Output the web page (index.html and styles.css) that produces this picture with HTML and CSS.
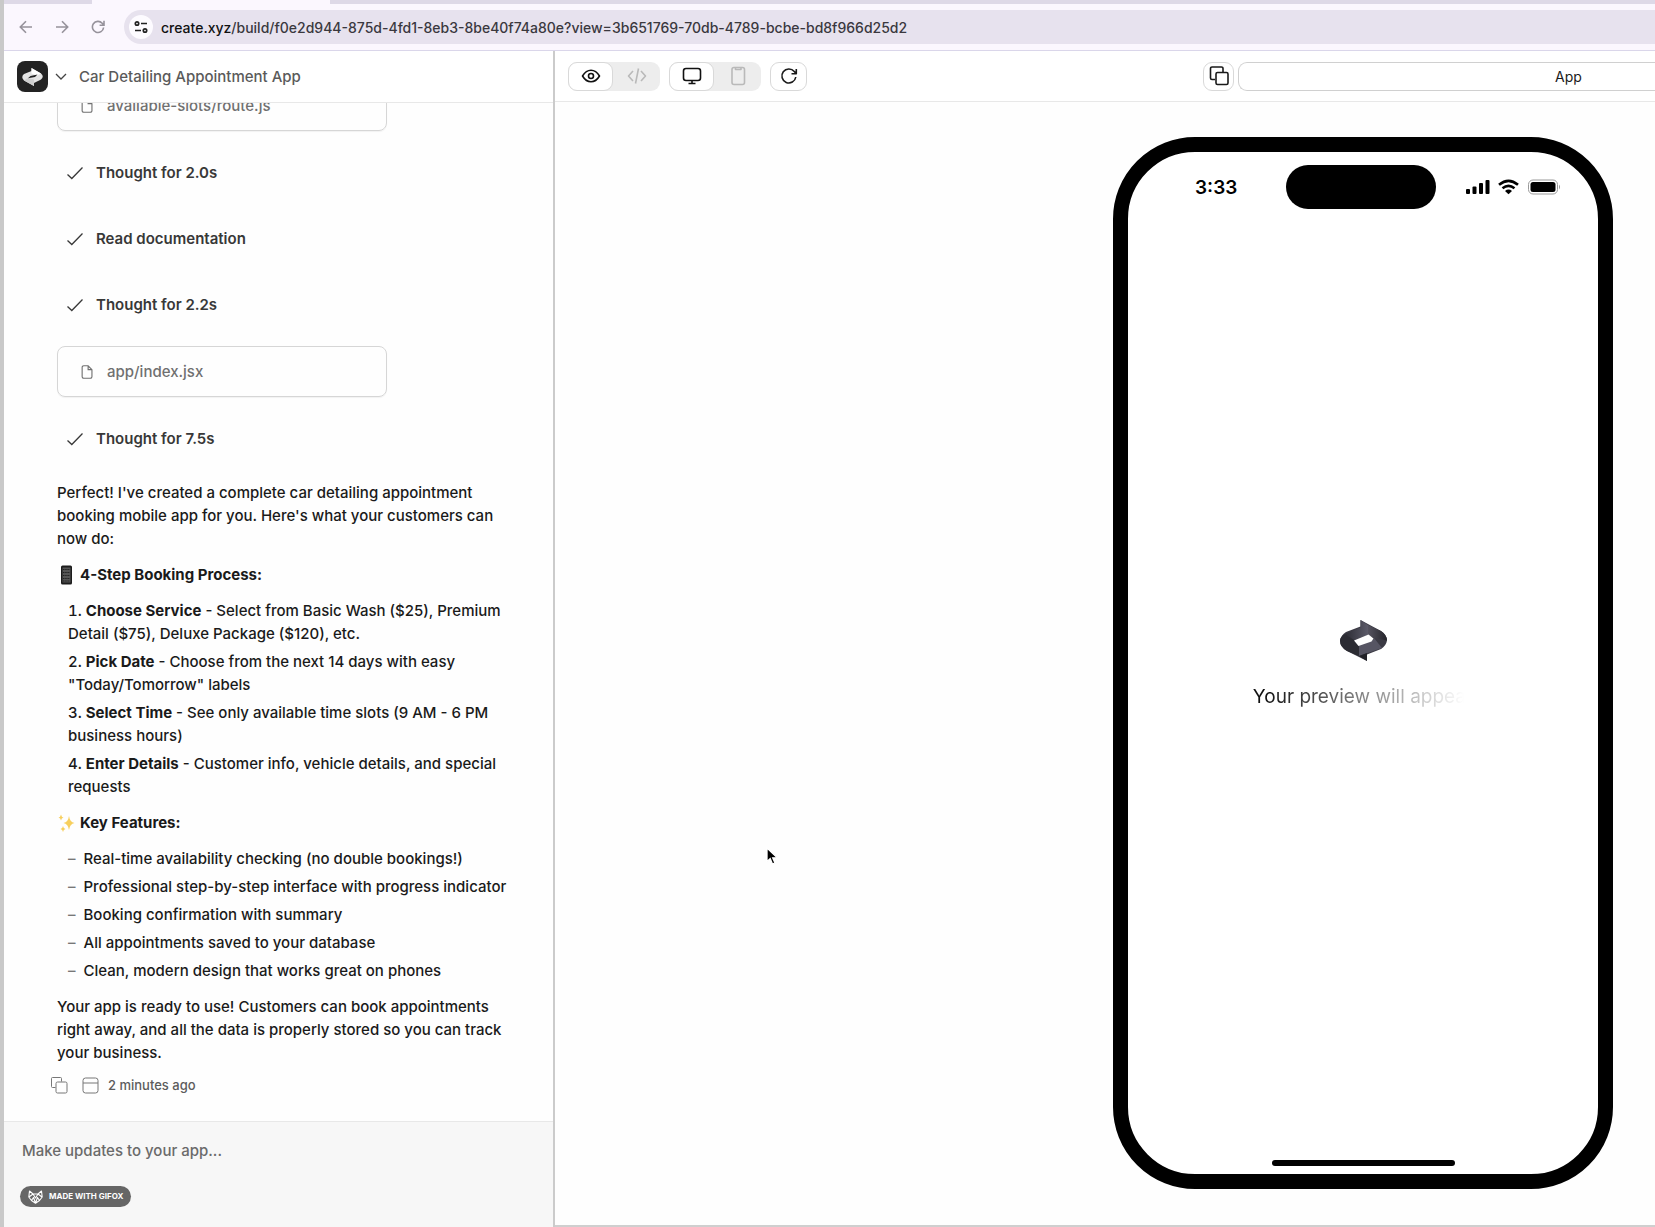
FILE: index.html
```html
<!DOCTYPE html>
<html lang="en">
<head>
<meta charset="utf-8">
<meta name="viewport" content="width=device-width, initial-scale=1">
<title>Car Detailing Appointment App</title>
<link rel="stylesheet" href="styles.css">
</head>
<body>
<svg class="defs" aria-hidden="true">
  <symbol id="check" viewBox="0 0 16 16"><path d="M.5 9.500 4.800 13.500 15.500 2.500" fill="none" stroke="currentColor" stroke-width="1.300"/></symbol>
  <symbol id="file" viewBox="0 0 12 15"><path d="M2.500.8h4.700L11.300 5v7.400a1.700 1.700 0 0 1-1.700 1.800H2.500A1.700 1.700 0 0 1 .8 12.400V2.600A1.700 1.700 0 0 1 2.500.8ZM7.200.8V5h4" fill="none" stroke="currentColor" stroke-width="1.200"/></symbol>
</svg>
<div class="window">
  <div class="tabs"><span class="tab"></span></div>
  <nav class="browser" aria-label="Browser">
    <button class="nav-btn" aria-label="Back"><svg width="14" height="14" viewBox="0 0 14 14"><path d="M13 7H1.500M7 1.200 1.300 7 7 12.800"/></svg></button>
    <button class="nav-btn" aria-label="Forward"><svg width="14" height="14" viewBox="0 0 14 14"><path d="M1 7h11.500M7 1.200 12.700 7 7 12.800"/></svg></button>
    <button class="nav-btn" aria-label="Reload"><svg width="14" height="14" viewBox="0 0 14 14"><path d="M12.600 7.500A5.600 5.600 0 1 1 11.200 3.200L12.800 5M13 .8V5.200H8.600"/></svg></button>
    <div class="omnibox">
      <button class="site-info" aria-label="Site information"><svg width="14" height="14" viewBox="0 0 14 14" fill="none" stroke="#222" stroke-width="1.700"><circle cx="3" cy="3.500" r="1.700"/><path d="M7 3.500h6M1 10.500h6"/><circle cx="11" cy="10.500" r="1.700"/></svg></button>
      <p class="url"><b>create.xyz</b>/build/f0e2d944-875d-4fd1-8eb3-8be40f74a80e?view=3b651769-70db-4789-bcbe-bd8f966d25d2</p>
    </div>
  </nav>
  <div class="workspace">
    <aside class="sidebar">
      <header class="project">
        <button class="project-btn" aria-label="Open project menu">
          <svg width="31" height="31" viewBox="0 0 31 31"><rect width="31" height="31" rx="8" fill="#232323"/><path d="M14.500 7 24 12.500Q27.500 15.500 24 18.500L17 22v3L7 19.500Q3.500 16 7 13L14.500 10Z" fill="#e4e4e4"/><path d="M14.500 7 24 12.500 20 14.500 14.500 12.500Z" fill="#fff"/><path d="m7 19.500 4-2.500 6 1.500V25Z" fill="#cfcfcf"/><path d="m11 17.200 2.500-2.200 7-1.500-2.500 2.500Z" fill="#232323"/></svg>
          <svg width="12" height="8" viewBox="0 0 12 8"><path d="m1 1 5 5 5-5" fill="none" stroke="#444" stroke-width="1.300"/></svg>
        </button>
        <h1>Car Detailing Appointment App</h1>
      </header>
      <main class="chat">
        <button class="file"><svg><use href="#file"/></svg>available-slots/route.js</button>
        <p class="step"><svg><use href="#check"/></svg>Thought for 2.0s</p>
        <p class="step"><svg><use href="#check"/></svg>Read documentation</p>
        <p class="step"><svg><use href="#check"/></svg>Thought for 2.2s</p>
        <button class="file"><svg><use href="#file"/></svg>app/index.jsx</button>
        <p class="step"><svg><use href="#check"/></svg>Thought for 7.5s</p>
        <div class="message">
          <p>Perfect! I've created a complete car detailing appointment booking mobile app for you. Here's what your customers can now do:</p>
          <h2><svg width="19" height="20" viewBox="0 0 19 20"><rect x="4" y="0.500" width="11" height="19" rx="1.500" fill="#1c1c1c"/><rect x="5.500" y="2.500" width="8" height="15" fill="#555"/><path d="M6 4.500h7M6 7.500h7M6 10.500h7M6 13.500h7M6 16h7" stroke="#222" stroke-dasharray="1.500 .7"/></svg>4-Step Booking Process:</h2>
          <ol>
            <li><strong>Choose Service</strong> - Select from Basic Wash ($25), Premium Detail ($75), Deluxe Package ($120), etc.</li>
            <li><strong>Pick Date</strong> - Choose from the next 14 days with easy "Today/Tomorrow" labels</li>
            <li><strong>Select Time</strong> - See only available time slots (9 AM - 6 PM business hours)</li>
            <li><strong>Enter Details</strong> - Customer info, vehicle details, and special requests</li>
          </ol>
          <h2><svg width="19" height="20" viewBox="0 0 19 20" fill="#f7cf5d"><path d="M12 3q.8 6 5.500 7-4.700 1-5.500 7-.8-6-5.500-7 4.700-1 5.500-7ZM4 1.500q.4 2.600 2.500 3-2.100.4-2.500 3-.4-2.600-2.500-3 2.100-.4 2.500-3ZM6 13q.4 2.600 2.500 3-2.100.4-2.500 3-.4-2.600-2.500-3 2.100-.4 2.500-3Z"/></svg>Key Features:</h2>
          <ul>
            <li>Real-time availability checking (no double bookings!)</li>
            <li>Professional step-by-step interface with progress indicator</li>
            <li>Booking confirmation with summary</li>
            <li>All appointments saved to your database</li>
            <li>Clean, modern design that works great on phones</li>
          </ul>
          <p>Your app is ready to use! Customers can book appointments right away, and all the data is properly stored so you can track your business.</p>
        </div>
        <div class="meta">
          <button aria-label="Copy message"><svg width="17" height="17" viewBox="0 0 17 17"><path d="M4.500 10.500h-3a1 1 0 0 1-1-1v-8a1 1 0 0 1 1-1h8a1 1 0 0 1 1 1v3"/><rect x="5" y="5" width="11" height="11" rx="1.500"/></svg></button>
          <button aria-label="View version"><svg width="17" height="17" viewBox="0 0 17 17"><rect x="1" y="1" width="15" height="15" rx="2.500"/><path d="M1 6h15"/></svg></button>
          <time>2 minutes ago</time>
        </div>
      </main>
      <footer class="composer">
        <input type="text" aria-label="Message" placeholder="Make updates to your app...">
        <div class="badge"><svg width="15" height="14" viewBox="0 0 15 14" fill="none" stroke="#fff" stroke-width="1.100" stroke-linejoin="round"><path d="M1.500 1 5 4h5l3.500-3 .7 6-2.700 3.500-4 2.800-4-2.800L.8 7ZM1 7l4-3 2.500 4L10 4l4 3M3.500 10.500 5.500 7.500 7.500 13l2-5.500 2 3"/></svg>MADE WITH GIFOX</div>
      </footer>
    </aside>
    <section class="preview" aria-label="Preview">
      <header class="toolbar">
        <div class="toggle">
          <button class="on" aria-label="Preview"><svg width="20" height="20" viewBox="0 0 20 20"><path d="M1.500 10Q5 4.200 10 4.200T18.500 10Q15 15.800 10 15.800T1.500 10Z"/><circle cx="10" cy="10" r="2.500"/></svg></button>
          <button aria-label="Code"><svg width="20" height="20" viewBox="0 0 20 20"><path d="M6 5 1.500 10 6 15M14 5l4.500 5-4.500 5M11.500 2.500l-3 15"/></svg></button>
        </div>
        <div class="toggle">
          <button class="on" aria-label="Desktop"><svg width="20" height="20" viewBox="0 0 20 20"><rect x="1.500" y="2.500" width="17" height="12" rx="2.500"/><path d="M10 14.500v3M6.500 17.500h7"/></svg></button>
          <button aria-label="Mobile"><svg width="20" height="20" viewBox="0 0 20 20"><rect x="4" y="1.500" width="12.500" height="17" rx="2"/><path d="M7.500 1.500v2h5.500v-2"/></svg></button>
        </div>
        <button class="refresh" aria-label="Refresh"><svg width="20" height="20" viewBox="0 0 20 20"><path d="M16.800 11A7 7 0 1 1 15.300 5.500L17 7.500M17.300 3v4.800h-4.800"/></svg></button>
        <button class="pages" aria-label="Pages"><svg width="20" height="20" viewBox="0 0 20 20"><path d="M6 13.500H3A1.500 1.500 0 0 1 1.500 12V2.500A1.500 1.500 0 0 1 3 1h9.500A1.500 1.500 0 0 1 14 2.500V6"/><rect x="7" y="6.500" width="12" height="12" rx="1.500"/></svg></button>
        <button class="route">App</button>
      </header>
      <div class="canvas">
        <div class="phone">
          <div class="status">
            <span class="clock">3:33</span>
            <span class="island"></span>
            <svg width="95" height="16" viewBox="0 0 95 16"><g><rect x="0" y="10" width="4" height="5" rx="1"/><rect x="6.500" y="7.500" width="4" height="7.500" rx="1"/><rect x="13" y="4" width="4" height="11" rx="1"/><rect x="19.500" y="1" width="4" height="14" rx="1"/></g><g fill="none" stroke="#000" stroke-width="2.600"><path d="M33 5.800q9.500-8 19 0M36.500 9.300q6-4.800 12 0"/></g><path d="M39 12q3.500-2.800 7 0l-3.500 3.200Z"/><rect x="62.500" y="1" width="29" height="14" rx="4.500" fill="none" stroke="#999"/><rect x="64.500" y="3" width="25" height="10" rx="2.500"/><path d="M93 5.500q2 2.500 0 5Z" fill="#999"/></svg>
          </div>
          <div class="splash">
            <svg width="47" height="41" viewBox="0 0 47 41">
              <defs><linearGradient id="g1"><stop stop-color="#2c2c34"/><stop offset="1" stop-color="#5c5b69"/></linearGradient><linearGradient id="g2"><stop stop-color="#55535f"/><stop offset="1" stop-color="#24242a"/></linearGradient></defs>
              <path d="M20.500 0 41 11Q47 15 47 20.500 46 26 41 29L27 34.500V41L7 31Q0 27 0 20.500 1 15 6 12L20.500 6.500Z" fill="#3b3a44"/>
              <path d="M20.500 0 28 5v10L14 20 5 14 20.500 7.500Z" fill="url(#g1)"/>
              <path d="M28 5 41 11Q47 15 47 20.500L34 18 28 15Z" fill="url(#g2)"/>
              <path d="M14 20 5 14Q0 17 0 20.500 0 27 7 31l12 5V25Z" fill="#2c2c33"/>
              <path d="M19 25l14-5.500 1-1.500 8 10-23 8Z" fill="#565563"/>
              <path d="M19 36 27 33v8Z" fill="#222228"/>
              <path d="m14 20.500 14.500-6 5 4-2 3-13 4.500Z" fill="#fff"/>
            </svg>
            <p>Your preview will appear</p>
          </div>
          <span class="home"></span>
        </div>
      </div>
    </section>
  </div>
</div>
<svg class="cursor" width="13" height="19" viewBox="0 0 13 19" aria-hidden="true"><path d="M1 1v13.500l3.200-2.800 2.300 5.300 2.500-1.100-2.300-5.100h4.600Z" stroke="#fff" stroke-width="1.300"/></svg>
</body>
</html>
```
FILE: styles.css
```css
* { box-sizing: border-box; margin: 0; padding: 0; }
body { font: 450 15px/23px Inter, "Liberation Sans", sans-serif; color: #1a1a1a; background: #fff; overflow: hidden; }
button, input { font: inherit; color: inherit; background: none; border: 0; }
svg { flex: none; display: block; }
.defs { position: absolute; width: 0; height: 0; }
.window { display: flex; flex-direction: column; height: 100vh; border-left: 4px solid #c9c9c9; }

.tabs { height: 4px; flex: none; padding-left: 88px; background: #ded9e7; }
.tab { display: block; width: 238px; height: 4px; background: #fbf7fe; }
.browser { display: flex; align-items: center; flex: none; height: 47px; padding-left: 15px; background: #fbf7fe; border-bottom: 1px solid #dad6ea; }
.nav-btn { display: flex; width: 36px; }
.nav-btn svg { fill: none; stroke: #96929b; stroke-width: 1.6; }
.nav-btn:nth-child(3) { width: 33px; }
.omnibox { display: flex; align-items: center; flex: 1; height: 34px; padding-left: 5px; gap: 8px; border-radius: 17px 0 0 17px; background: #e7e2ee; }
.site-info { display: grid; place-items: center; width: 24px; height: 24px; border-radius: 50%; background: #fdfbff; }
.url { color: #3a383e; white-space: nowrap; font-size: 14px; }
.url b { font-weight: 450; color: #111; }

.workspace { display: flex; flex: 1; min-height: 0; }
.sidebar { display: flex; flex-direction: column; flex: none; width: 551px; border-right: 2px solid #cbcbcb; }
.project { display: flex; align-items: center; gap: 12px; flex: none; height: 52px; padding-left: 13px; border-bottom: 1px solid #e8e8e8; }
.project-btn { display: flex; align-items: center; gap: 7px; }
h1 { font-size: 15px; font-weight: 450; color: #5a5a5a; }

.chat { display: flex; flex-direction: column; justify-content: flex-end; flex: 1; min-height: 0; overflow: hidden; padding: 0 28px 24px 53px; background: #fefefe; }
.file { display: flex; align-items: center; flex: none; gap: 14px; width: 330px; height: 51px; padding-left: 23px; border: 1px solid #d6d6d6; border-radius: 8px; color: #707070; box-shadow: 0 1px 1px #0000000d; }
.file svg { width: 12px; height: 14px; }
.step { display: flex; align-items: center; flex: none; gap: 13px; height: 23px; margin: 22px 0 21px; padding-left: 10px; font-weight: 600; color: #383838; }
.step svg { width: 16px; height: 16px; }
.file + .step { margin-top: 30px; }
.step:has(+ .file) { margin-bottom: 30px; }
.message { display: flex; flex-direction: column; flex: none; gap: 13px; padding-top: 10px; }
.message > p { padding-right: 10px; }
h2 { display: flex; align-items: center; gap: 4px; font-size: 15px; line-height: 23px; font-weight: 700; }
strong { font-weight: 700; }
ol, ul { display: flex; flex-direction: column; gap: 5px; padding-left: 11px; }
ol { list-style-position: inside; }
ul { list-style: none; }
ul li { display: flex; gap: 8px; }
ul li::before { content: "–"; color: #777; }
.meta { display: flex; align-items: center; flex: none; height: 24px; margin: 9px 0 0 -6px; font-size: 13px; color: #5c5c5c; }
.meta button { width: 31px; }
.meta button + button { width: 26px; }
.meta svg { fill: none; stroke: #777; }

.composer { display: flex; flex-direction: column; align-items: flex-start; flex: none; gap: 24px; height: 106px; padding: 16px; background: #f7f7f7; border-top: 1px solid #e8e8e8; }
.composer input { width: 100%; height: 24px; padding-left: 2px; outline: 0; }
.composer input::placeholder { color: #6a6a6a; opacity: 1; }
.badge { display: flex; align-items: center; gap: 6px; height: 21px; padding: 0 8px; border-radius: 11px; background: #666; color: #fff; font: 700 8px/21px Inter, sans-serif; }

.preview { display: flex; flex-direction: column; flex: 1; min-width: 0; }
.toolbar { display: flex; align-items: center; flex: none; height: 51px; padding-left: 13px; border-bottom: 1px solid #e8e8e8; }
.toolbar button { display: grid; place-items: center; flex: none; height: 29px; border-radius: 9px; }
.toolbar svg { fill: none; stroke: currentColor; stroke-width: 1.6; stroke-linejoin: round; }
.toggle { display: flex; width: 92px; margin-right: 9px; border-radius: 9px; background: #ededed; color: #b9b9b9; }
.toggle button { width: 48px; }
.toolbar .on { width: 45px; border: 1px solid #d9d9d9; background: #fff; color: #111; }
.toolbar .refresh { width: 37px; border: 1px solid #d9d9d9; }
.toolbar .pages { width: 31px; margin: 0 4px 0 auto; border: 1px solid #d9d9d9; }
.toolbar .route { width: 417px; padding-left: 243px; border: 1px solid #d0d0d0; border-right: 0; border-radius: 9px 0 0 9px; font-size: 14px; font-weight: 400; }

.canvas { display: flex; justify-content: flex-end; flex: 1; min-height: 0; padding: 35px 42px 36px 0; background: #fefefe; border-bottom: 2px solid #cfcfcf; }
.phone { display: flex; flex-direction: column; align-items: center; width: 500px; border: 15px solid #000; border-radius: 82px; background: #fff; }
.status { display: grid; grid-template-columns: 91px 150px 1fr; align-items: center; width: 100%; margin-top: 13px; padding: 0 37px 0 67px; }
.status svg { justify-self: end; }
.clock { font-size: 19px; font-weight: 600; color: #000; }
.island { height: 44px; border-radius: 22px; background: #000; }
.splash { display: flex; flex-direction: column; align-items: center; justify-content: center; flex: 1; gap: 22px; padding-bottom: 38px; }
.splash p { font-size: 19px; line-height: 28px; font-weight: 400; background: linear-gradient(90deg, #111 5%, #777 45%, #b5b5b5 70%, #fff 96%); background-clip: text; color: transparent; }
.home { width: 183px; height: 6px; margin-bottom: 8px; border-radius: 3px; background: #000; }
.cursor { position: absolute; left: 766px; top: 847px; }
```
